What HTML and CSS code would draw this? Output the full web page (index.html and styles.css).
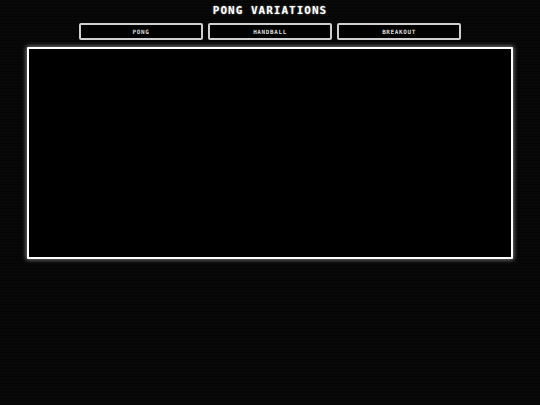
FILE: index.html
```html
<!DOCTYPE html>
<html>
    <head>
        <meta charset="UTF-8">
        <meta name="viewport" content="width=device-width, initial-scale=1">
        <title>Pong Variations</title>
        <link rel="stylesheet" href="styles.css">
    </head>
    <body>
        <h1 class="title">PONG VARIATIONS</h1>

        <div class="modes">
            <button class="mode" data-game="pong">PONG</button>
            <button class="mode" data-game="handball">HANDBALL</button>
            <button class="mode" data-game="breakout">BREAKOUT</button>
        </div>

        <div class="screen">
            <canvas id="game" class="board" width="482" height="208"></canvas>
        </div>
    </body>
</html>
```

FILE: styles.css
```css
html, body {
    margin: 0;
    padding: 0;
    height: 100%;
    font-family: "DejaVu Sans Mono", "Liberation Mono", monospace;
    color: #fff;
}
body {
    background-color: #060606;
    background-image: repeating-linear-gradient(
        to bottom,
        rgba(255,255,255,.012) 0,
        rgba(255,255,255,.012) 1px,
        transparent 1px,
        transparent 3px
    );
}
.title {
    margin: 0;
    height: 22px;
    line-height: 22px;
    text-align: center;
    font-size: 11px;
    font-weight: bold;
    letter-spacing: 1px;
    text-shadow: 0 0 2px rgba(255,255,255,.5);
}
.modes {
    display: flex;
    justify-content: center;
    gap: 5px;
    margin-top: 1px;
}
.mode {
    width: 124px;
    height: 17px;
    padding: 0;
    box-sizing: border-box;
    background: #000;
    color: #ddd;
    border: 2px solid #cfcfcf;
    border-radius: 2px;
    font-family: "DejaVu Sans Mono", "Liberation Mono", monospace;
    font-size: 6px;
    font-weight: bold;
    letter-spacing: 0.6px;
    cursor: pointer;
}
.screen {
    display: flex;
    justify-content: center;
    margin-top: 7px;
}
.board {
    display: block;
    background: #000;
    border: 2px solid #fff;
    border-radius: 1px;
    box-shadow: 0 0 4px 1px rgba(255,255,255,.45);
}
```
